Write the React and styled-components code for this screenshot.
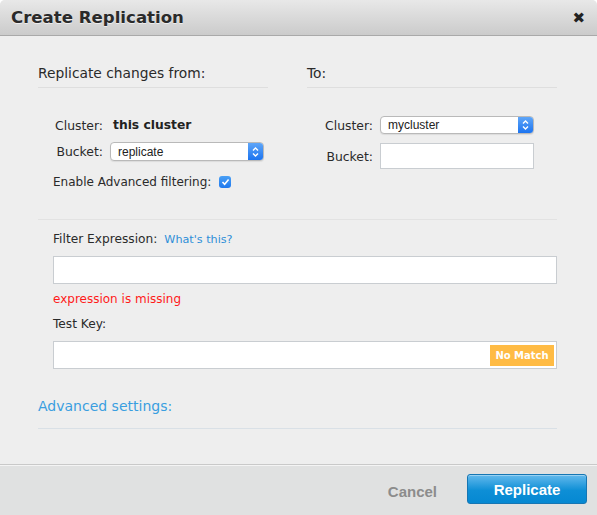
import React from "react";
import styled, { createGlobalStyle } from "styled-components";

const Global = createGlobalStyle`
  html, body { margin: 0; padding: 0; background: #ffffff; }
  body { font-family: "DejaVu Sans", Verdana, sans-serif; color: #222; }
`;

const Dialog = styled.div`
  width: 597px;
  height: 515px;
  display: flex;
  flex-direction: column;
  background: #eeeeee;
  border-radius: 5px 5px 0 0;
  overflow: hidden;
`;

const Header = styled.div`
  height: 35px;
  flex: none;
  display: flex;
  align-items: center;
  justify-content: space-between;
  padding: 0 11px;
  background: linear-gradient(#e8e8e8, #cbcbcb);
  border-bottom: 1px solid #a9a9a9;
`;

const Title = styled.h1`
  margin: 0;
  font-family: "DejaVu Sans", Verdana, sans-serif;
  font-size: 16.6px;
  font-weight: bold;
  color: #2a2a2a;
  text-shadow: 0 1px 0 rgba(255,255,255,0.6);
`;

const Close = styled.span`
  font-family: "DejaVu Sans", sans-serif;
  font-size: 15px;
  font-weight: bold;
  color: #222;
  margin-right: 1px;
  margin-top: 1px;
`;

const Body = styled.div`
  flex: 1;
  padding: 28px 40px 0 38px;
  display: flex;
  flex-direction: column;
`;

const Columns = styled.div`
  display: grid;
  grid-template-columns: 230px 250px;
  column-gap: 39px;
`;

const Column = styled.div`
  display: flex;
  flex-direction: column;
`;

const SectionHead = styled.div`
  font-size: 13.8px;
  line-height: 18px;
  color: #2a2a2a;
  padding-bottom: 5px;
  border-bottom: 1px solid #dedede;
`;

const FieldGrid = styled.div`
  display: grid;
  grid-template-columns: ${(p) => p.$label}px 154px;
  column-gap: 7px;
  align-items: center;
  margin-left: ${(p) => p.$indent}px;
  margin-top: ${(p) => p.$top}px;
  row-gap: ${(p) => p.$gap}px;
`;

const Label = styled.label`
  font-size: 12.4px;
  text-align: right;
  color: #2a2a2a;
  white-space: nowrap;
`;

const Value = styled.span`
  font-size: 12.3px;
  font-weight: bold;
  color: #222;
  padding-left: 3px;
  line-height: 20px;
`;

const SelectBox = styled.div`
  height: ${(p) => p.$h}px;
  box-sizing: border-box;
  display: flex;
  align-items: stretch;
  background: #fff;
  border: 1px solid #b9b9b9;
  border-radius: 4px;
  overflow: hidden;
  box-shadow: 0 1px 1px rgba(0,0,0,0.08);
`;

const SelectText = styled.span`
  flex: 1;
  font-family: "Liberation Sans", Arial, sans-serif;
  font-size: 12px;
  color: #222;
  padding-left: 7px;
  display: flex;
  align-items: center;
`;

const SelectArrow = styled.span`
  width: 15px;
  background: linear-gradient(#5fa6f8, #1c74f0);
  display: flex;
  align-items: center;
  justify-content: center;
`;

const TextInput = styled.div`
  height: ${(p) => p.$h}px;
  box-sizing: border-box;
  background: #fff;
  border: 1px solid #c9cdd1;
  display: flex;
  align-items: center;
  justify-content: flex-end;
  padding-right: 2px;
`;

const CheckRow = styled.div`
  display: flex;
  align-items: center;
  gap: 8px;
  margin-left: 15px;
  margin-top: 11px;
  font-size: 12px;
  color: #2a2a2a;
  line-height: 20px;
`;

const Check = styled.span`
  width: 12px;
  height: 12px;
  border-radius: 3px;
  background: linear-gradient(#4aa0f5, #1e78ee);
  display: flex;
  align-items: center;
  justify-content: center;
`;

const Divider = styled.div`
  height: 1px;
  background: ${(p) => p.$color};
  margin-top: ${(p) => p.$top}px;
`;

const FilterSection = styled.div`
  display: flex;
  flex-direction: column;
  padding-left: 15px;
`;

const FieldLabel = styled.div`
  font-size: 12.2px;
  line-height: 18px;
  color: #2a2a2a;
  margin-top: ${(p) => p.$top}px;
  margin-bottom: ${(p) => p.$bottom}px;
  display: flex;
  align-items: baseline;
  gap: 7px;
`;

const Link = styled.a`
  font-size: 11.2px;
  color: #2f8fd8;
  text-decoration: none;
`;

const ErrorText = styled.div`
  font-size: 12px;
  line-height: 18px;
  color: #ff1a1a;
  margin-top: 6px;
`;

const Badge = styled.span`
  background: #ffbb44;
  color: #fff;
  font-family: "DejaVu Sans", Verdana, sans-serif;
  font-size: 10px;
  font-weight: bold;
  height: 21px;
  width: 64px;
  display: flex;
  align-items: center;
  justify-content: center;
`;

const AdvancedLink = styled.div`
  font-size: 14px;
  line-height: 20px;
  color: #3a9ee0;
  margin-top: 27px;
`;

const Footer = styled.div`
  height: 50px;
  flex: none;
  background: #e0e1e1;
  border-top: 1px solid #c9c9c9;
  box-shadow: inset 0 1px 0 #f4f4f4;
  display: flex;
  align-items: center;
  justify-content: flex-end;
  padding: 0 10px 0 0;
  gap: 30px;
`;

const CancelButton = styled.button`
  background: none;
  border: none;
  font-family: "Liberation Sans", Arial, sans-serif;
  font-weight: bold;
  font-size: 15px;
  color: #8c8c8c;
  padding: 0;
  margin-top: 2px;
`;

const PrimaryButton = styled.button`
  width: 120px;
  height: 30px;
  border-radius: 3px;
  border: 1px solid #1676b3;
  background: linear-gradient(#63b9ec, #0e8fd6 55%, #0588d2);
  color: #fff;
  font-family: "Liberation Sans", Arial, sans-serif;
  font-weight: bold;
  font-size: 15px;
  box-shadow: inset 0 1px 0 rgba(255,255,255,0.35);
  padding: 0;
  margin-top: -2px;
`;

const Arrows = () => (
  <svg width="9" height="12" viewBox="0 0 9 12">
    <path d="M2 4.5 L4.5 2 L7 4.5 M2 7.5 L4.5 10 L7 7.5" fill="none" stroke="#fff" strokeWidth="1.4" />
  </svg>
);

const Select = ({ value, h }) => (
  <SelectBox $h={h}>
    <SelectText>{value}</SelectText>
    <SelectArrow>
      <Arrows />
    </SelectArrow>
  </SelectBox>
);

export default function App() {
  return (
    <>
      <Global />
      <Dialog>
        <Header>
          <Title>Create Replication</Title>
          <Close>✖</Close>
        </Header>
        <Body>
          <Columns>
            <Column>
              <SectionHead>Replicate changes from:</SectionHead>
              <FieldGrid $label={50} $indent={15} $top={27} $gap={7}>
                <Label>Cluster:</Label>
                <Value>this cluster</Value>
                <Label>Bucket:</Label>
                <Select value="replicate" h={19} />
              </FieldGrid>
              <CheckRow>
                Enable Advanced filtering:
                <Check>
                  <svg width="9" height="8" viewBox="0 0 9 8">
                    <path d="M1.5 4 L3.6 6.2 L7.6 1.5" fill="none" stroke="#fff" strokeWidth="1.6" />
                  </svg>
                </Check>
              </CheckRow>
            </Column>
            <Column>
              <SectionHead>To:</SectionHead>
              <FieldGrid $label={51} $indent={15} $top={28} $gap={9}>
                <Label>Cluster:</Label>
                <Select value="mycluster" h={18} />
                <Label>Bucket:</Label>
                <TextInput $h={26} />
              </FieldGrid>
            </Column>
          </Columns>
          <Divider $color="#e2e2e2" $top={27} />
          <FilterSection>
            <FieldLabel $top={10} $bottom={7}>
              Filter Expression:
              <Link href="#">What's this?</Link>
            </FieldLabel>
            <TextInput $h={28} />
            <ErrorText>expression is missing</ErrorText>
            <FieldLabel $top={7} $bottom={8}>Test Key:</FieldLabel>
            <TextInput $h={28}>
              <Badge>No Match</Badge>
            </TextInput>
          </FilterSection>
          <AdvancedLink>Advanced settings:</AdvancedLink>
          <Divider $color="#d9e0e6" $top={12} />
        </Body>
        <Footer>
          <CancelButton>Cancel</CancelButton>
          <PrimaryButton>Replicate</PrimaryButton>
        </Footer>
      </Dialog>
    </>
  );
}
